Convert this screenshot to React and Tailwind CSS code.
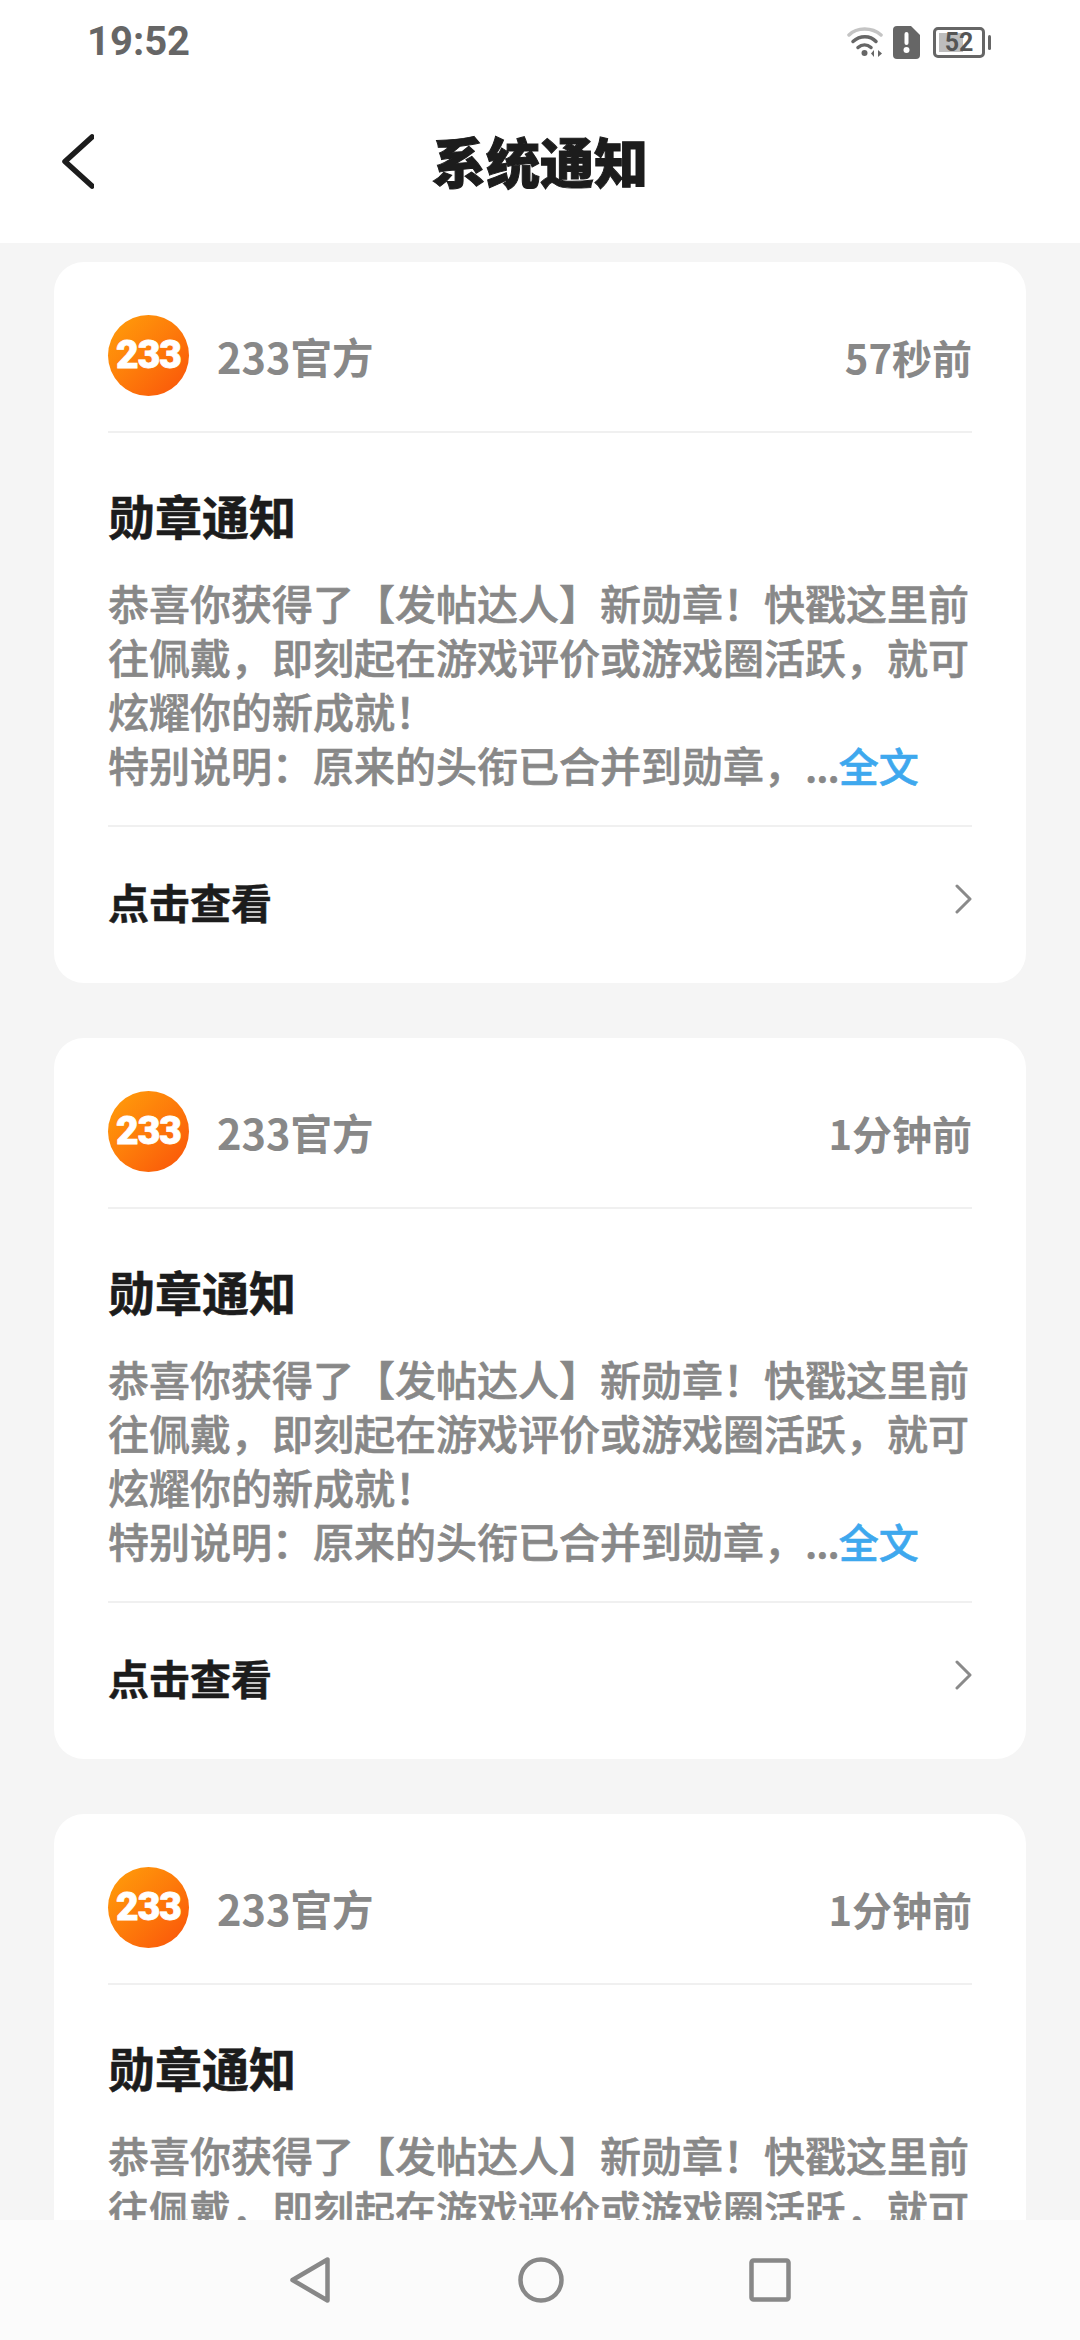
import React from "react";

const CJK = "font-['Noto_Sans_CJK_SC',sans-serif]";

const notices = [{ time: "57秒前" }, { time: "1分钟前" }, { time: "1分钟前" }];

const WifiIcon = () => (
  <svg width="38" height="32" viewBox="0 0 38 32" fill="none" strokeLinecap="round">
    <path d="M4 9C12 1 27 1 36 9" stroke="#c4c4c4" strokeWidth="3.5" />
    <path d="M8 15.5C15 9 25 9 31 15.5" stroke="#666" strokeWidth="3.5" />
    <path d="M13 21.5C17 18 22 18 26 21.5" stroke="#666" strokeWidth="3.5" />
    <circle cx="19.5" cy="27" r="3" fill="#666" />
    <path d="M29 24L26 27.5L29 31Z" fill="#666" />
    <path d="M33 24L37 27.5L33 31Z" fill="#666" />
  </svg>
);

const SimIcon = () => (
  <svg width="27" height="33" viewBox="0 0 27 33">
    <path d="M4 0H18L27 9V29A4 4 0 0 1 23 33H4A4 4 0 0 1 0 29V4A4 4 0 0 1 4 0Z" fill="#666" />
    <rect x="11.5" y="6" width="4" height="13" rx="2" fill="#fff" />
    <circle cx="13.5" cy="24" r="3" fill="#fff" />
  </svg>
);

const Battery = () => (
  <div className="flex items-center gap-[3px]">
    <div className="relative w-[52px] h-[31px] rounded-[5px] border-[3px] border-[#666] overflow-hidden flex items-center justify-center">
      <div className="absolute left-[3px] top-[3px] bottom-[3px] w-[24px] bg-[#bdbdbd]" />
      <span className="relative text-[25px] leading-none font-bold text-[#555] font-['Roboto',sans-serif]">52</span>
    </div>
    <div className="w-[3px] h-[15px] rounded-full bg-[#666]" />
  </div>
);

const Card = ({ time }) => (
  <div className="bg-white rounded-[30px] px-[54px] shrink-0">
    <div className="flex items-center h-[171px] pt-[20px] border-b-2 border-[#f0f0f0]">
      <div className="w-[81px] h-[81px] -mt-[2px] rounded-full bg-linear-to-br from-[#ff9f0a] to-[#f9500a] flex items-center justify-center">
        <span className="text-white text-[39px] leading-none font-black tracking-[-1px] [-webkit-text-stroke:0.8px_#fff] font-['Roboto',sans-serif]">233</span>
      </div>
      <span className={`ml-[28px] text-[41.5px] leading-none font-bold text-[#888] ${CJK}`}>233官方</span>
      <span className={`ml-auto text-[40px] leading-none font-bold text-[#888] ${CJK}`}>{time}</span>
    </div>
    <div className={`pt-[52px] border-b-2 border-[#f0f0f0] h-[394px] ${CJK}`}>
      <div className="text-[47px] leading-[60px] font-bold text-[#1c1c1c] [-webkit-text-stroke:0.6px_#1c1c1c]">勋章通知</div>
      <div className="mt-[30px] text-[41px] leading-[54px] font-medium text-[#888] [-webkit-text-stroke:0.6px_#888]">
        <div className="whitespace-nowrap">恭喜你获得了【发帖达人】新勋章！快戳这里前</div>
        <div className="whitespace-nowrap">往佩戴，即刻起在游戏评价或游戏圈活跃，就可</div>
        <div className="whitespace-nowrap">炫耀你的新成就！</div>
        <div className="whitespace-nowrap">
          特别说明：原来的头衔已合并到勋章，<span className="tracking-[-1px]">...</span>
          <span className="text-[#3ea8ee] text-[40px] [-webkit-text-stroke:0.6px_#3ea8ee]">全文</span>
        </div>
      </div>
    </div>
    <div className="flex items-center justify-between h-[156px] pb-[7px]">
      <span className={`text-[41px] leading-none font-bold text-[#1c1c1c] [-webkit-text-stroke:0.5px_#1c1c1c] ${CJK}`}>点击查看</span>
      <svg width="17" height="30" viewBox="0 0 17 30" fill="none" className="-mt-[5px]">
        <path d="M2 2L15 15L2 28" stroke="#8a8a8a" strokeWidth="3" strokeLinecap="round" strokeLinejoin="round" />
      </svg>
    </div>
  </div>
);

export default function App() {
  return (
    <div className="w-[1080px] h-[2340px] flex flex-col overflow-hidden bg-[#f5f5f5]">
      {/* status bar */}
      <div className="h-[84px] bg-white flex items-center justify-between pl-[87px] pr-[89px] shrink-0">
        <span className="text-[40px] leading-none font-bold text-[#666] font-['Roboto',sans-serif]">19:52</span>
        <div className="flex items-center">
          <WifiIcon />
          <div className="ml-[10px] mr-[13px]">
            <SimIcon />
          </div>
          <Battery />
        </div>
      </div>

      {/* title bar */}
      <div className="relative h-[159px] pb-[5px] bg-white flex items-center justify-center shrink-0">
        <svg width="33" height="55" viewBox="0 0 33 55" fill="none" className="absolute left-[61px] top-[50px]">
          <path d="M31 3L4 27.5L31 52" stroke="#1c1c1c" strokeWidth="5.5" strokeLinecap="round" strokeLinejoin="round" />
        </svg>
        <span className={`text-[54px] leading-none font-black text-[#1c1c1c] [-webkit-text-stroke:1px_#1c1c1c] ${CJK}`}>系统通知</span>
      </div>

      {/* notices */}
      <div className="flex-1 min-h-0 overflow-hidden px-[54px] pt-[19px] flex flex-col gap-[55px]">
        {notices.map((n, i) => (
          <Card key={i} time={n.time} />
        ))}
      </div>

      {/* nav bar */}
      <div className="h-[120px] bg-[#fbfbfb] flex items-center justify-center shrink-0">
        <svg width="40" height="46" viewBox="0 0 40 46" fill="none">
          <path d="M37.5 2.5V43.5L2.5 23Z" stroke="#888" strokeWidth="4.5" strokeLinejoin="round" />
        </svg>
        <svg width="46" height="46" viewBox="0 0 46 46" fill="none" className="ml-[188px]">
          <circle cx="23" cy="23" r="20.5" stroke="#888" strokeWidth="4.5" />
        </svg>
        <svg width="42" height="44" viewBox="0 0 42 44" fill="none" className="ml-[185px]">
          <rect x="2.5" y="2.5" width="37" height="39" rx="2" stroke="#888" strokeWidth="4.5" />
        </svg>
      </div>
    </div>
  );
}
